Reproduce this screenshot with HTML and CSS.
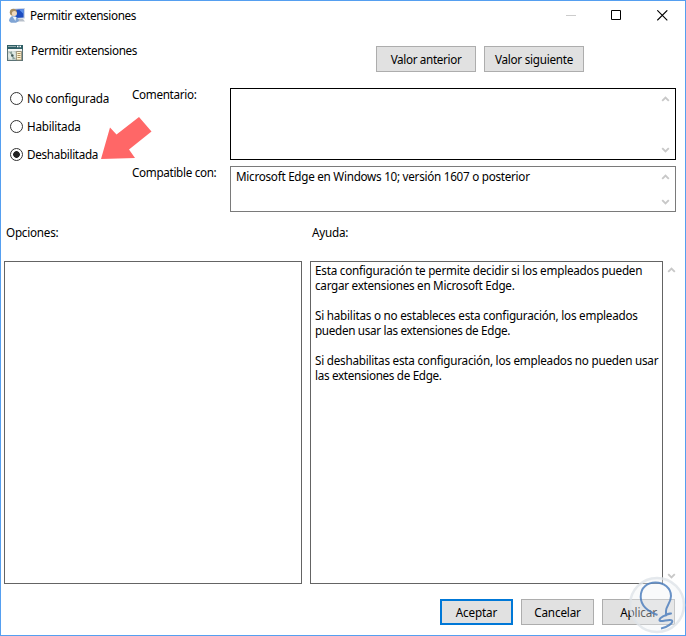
FILE: index.html
```html
<!DOCTYPE html>
<html lang="es">
<head>
<meta charset="utf-8">
<title>Permitir extensiones</title>
<link rel="stylesheet" href="styles.css">
</head>
<body>
<svg class="defs" width="0" height="0">
  <symbol id="up" viewBox="0 0 8 6"><path d="M0.7 4.9 4 1.6 7.3 4.9" fill="none" stroke="#c8c8c8" stroke-width="1.9"/></symbol>
  <symbol id="down" viewBox="0 0 8 6"><path d="M0.7 1.1 4 4.4 7.3 1.1" fill="none" stroke="#c8c8c8" stroke-width="1.9"/></symbol>
</svg>
<div class="window">
  <header class="titlebar">
    <svg class="app-icon" width="16" height="16" viewBox="0 0 16 16">
      <path d="M4.500.8 15.800 0v10.600L4.500 11z" fill="#c3cee0"/>
      <path d="M5.500 1.700 14.600 1.100v8.400L5.500 9.900z" fill="#1c4cc0"/>
      <path d="M10 1.400 14.600 1.100v5z" fill="#5c90ea"/>
      <path d="M9 11h5l2 2.500H8z" fill="#b7bfca"/>
      <circle cx="4.300" cy="4.200" r="3.500" fill="#a98f62"/>
      <circle cx="5.400" cy="5.400" r="2.500" fill="#f0d9bd"/>
      <path d="M0 13c0-3 2-5 4.500-5s5 2 5.500 5l-3 1.800H2z" fill="#7fa4d4"/>
      <path d="m3.500 8.500 2.900 4.500 1-4z" fill="#eef5fc"/>
    </svg>
    <span class="text title">Permitir extensiones</span>
    <div class="controls">
      <svg width="11" height="11" viewBox="0 0 11 11"><path d="M0 5.500h10" stroke="#ccc"/></svg>
      <svg width="11" height="11" viewBox="0 0 11 11"><path d="M.5.5h9v9h-9z" fill="none" stroke="#000"/></svg>
      <svg width="11" height="11" viewBox="0 0 11 11"><path d="m.3.3 10 10m0-10-10 10" stroke="#000" stroke-width="1.1"/></svg>
    </div>
  </header>

  <section class="policy">
    <svg class="policy-icon" width="16" height="16" viewBox="0 0 16 16">
      <path d="M0 0h16v16H0z" fill="#5b7377"/>
      <path d="M0 0h16v4.500H0z" fill="#2f5f66"/>
      <path d="M1 1.500h8" stroke="#8fa9ab"/>
      <path d="M10 1.500h1.500m1 0H14" stroke="#fff" stroke-width="1.500"/>
      <path d="M1 4h14v2H1z" fill="#f4f6f4"/>
      <path d="M1 6h14v9H1z" fill="#c3ccc8"/>
      <circle cx="5.300" cy="10.500" r="4.300" fill="#dfe9e4"/>
      <path d="M5.300 10.500 2 7.500l3-1.300zM5.300 10.500l3.200 3-3 1.200z" fill="#8ea39d"/>
      <circle cx="5.300" cy="10.500" r="1.300" fill="#3f5654"/>
      <path d="M9.400 6.500h5v8.500h-5z" fill="#fff5d4" stroke="#8a8068" stroke-width=".8"/>
      <path d="M10.500 8.500h3M10.500 10.500h3M10.500 12.500h3" stroke="#a28450" stroke-width=".9"/>
    </svg>
    <span class="text name title">Permitir extensiones</span>
    <button class="btn nav"><span class="prev">Valor anterior</span></button>
    <button class="btn nav"><span class="next">Valor siguiente</span></button>
  </section>

  <section class="settings">
    <div class="states">
      <label class="state"><i class="radio"></i><span class="text">No configurada</span></label>
      <label class="state"><i class="radio"></i><span class="text">Habilitada</span></label>
      <label class="state"><i class="radio on"></i><span class="text tight">Deshabilitada</span></label>
      <svg class="pointer" width="52" height="44" viewBox="0 0 52 44"><path d="M0 42 9 10.500l6.500 7L38 0l12.500 14.500L28 32.500l6 8.500z" fill="#ff6767"/></svg>
    </div>
    <div class="labels">
      <span class="text tight">Comentario:</span>
      <span class="text tight">Compatible con:</span>
    </div>
    <div class="fields">
      <div class="box comment"><span></span>
        <div class="scroll"><svg width="9" height="6"><use href="#up"/></svg><svg width="9" height="6"><use href="#down"/></svg></div>
      </div>
      <div class="box supported"><span class="text sup">Microsoft Edge en Windows 10; versión 1607 o posterior</span>
        <div class="scroll"><svg width="9" height="6"><use href="#up"/></svg><svg width="9" height="6"><use href="#down"/></svg></div>
      </div>
    </div>
  </section>

  <section class="panels">
    <div class="column options">
      <h2 class="text">Opciones:</h2>
      <div class="panel"></div>
    </div>
    <div class="column help">
      <h2 class="text">Ayuda:</h2>
      <div class="panel">
        <p><span class="text">Esta configuración te permite decidir si los empleados pueden</span><br><span class="text a2">cargar extensiones en Microsoft Edge.</span></p>
        <p><span class="text">Si habilitas o no estableces esta configuración, los empleados</span><br><span class="text tight">pueden usar las extensiones de Edge.</span></p>
        <p><span class="text">Si deshabilitas esta configuración, los empleados no pueden usar</span><br><span class="text tight">las extensiones de Edge.</span></p>
      </div>
    </div>
    <div class="scroll outer"><svg width="9" height="6"><use href="#up"/></svg><svg width="9" height="6"><use href="#down"/></svg></div>
  </section>

  <footer class="actions">
    <button class="btn primary">Aceptar</button>
    <button class="btn">Cancelar</button>
    <button class="btn">Aplicar</button>
  </footer>
  <svg class="watermark" width="58" height="58" viewBox="0 0 58 58">
    <circle cx="29" cy="29" r="27" fill="#f0f2f5" fill-opacity=".38" stroke="#dfe3e9" stroke-opacity=".8" stroke-width="2.500"/>
    <path d="M29.500 39C24 37 13 32 12.700 21 12.500 11 20 6.500 27.500 6.500 36 6.500 43 12 43 20c0 7-5 10-5 15v4.500c1.500-2 3-2.300 5-2-6 1-11.500 4.500-11.500 6.500 0 3 10-1.500 12.500.5 1.500 2-4.500 7-11 8" fill="none" stroke="#4f7fbd" stroke-opacity=".85" stroke-width="2" stroke-linejoin="round"/>
  </svg>
</div>
</body>
</html>
```
FILE: styles.css
```css
* { box-sizing: border-box; }
body {
  margin: 0;
  background: #fff;
  color: #000;
  font: 11.7px/15px "Noto Sans", "Open Sans", sans-serif;
  letter-spacing: -0.23px;
}
svg { display: block; flex: none; }
.defs { position: absolute; }
.text { white-space: nowrap; }
.title { letter-spacing: -0.36px; }
.tight { letter-spacing: -0.32px; }
.a2, .sup { letter-spacing: -0.27px; }
.window {
  position: relative;
  width: 686px;
  height: 636px;
  border: 1px solid #559ff0;
  display: flex;
  flex-direction: column;
}
.titlebar {
  height: 29px;
  display: flex;
  align-items: center;
  padding: 0 17px 0 8px;
  gap: 5px;
}
.controls { margin-left: auto; display: grid; grid-template-columns: 45px 46px 11px; }
.policy {
  height: 57px;
  display: flex;
  align-items: flex-start;
  padding: 15px 0 0 6px;
}
.policy-icon { margin-right: 8px; }
.name { width: 345px; margin-top: -2px; }
.btn {
  width: 73px;
  height: 26px;
  padding: 0;
  border: 1px solid #adadad;
  background: #e1e1e1;
  color: #000;
  font: inherit;
  letter-spacing: -0.15px;
  white-space: nowrap;
}
.btn.nav { width: 100px; margin: 1px 8px 0 0; }
.prev { letter-spacing: -0.35px; }
.next { letter-spacing: -0.25px; }
.btn.primary { border: 2px solid #0078d7; }
.settings {
  height: 138px;
  display: grid;
  grid-template-columns: 122px 98px 446px;
  padding: 0 0 0 9px;
}
.states { position: relative; padding-top: 5px; }
.state { display: flex; align-items: center; gap: 4px; height: 13px; margin-bottom: 15px; }
.radio {
  width: 13px;
  height: 13px;
  border: 1px solid #333;
  border-radius: 50%;
  flex: none;
}
.radio.on { background: radial-gradient(circle, #222 0 3px, #fff 3.7px); }
.pointer { position: absolute; left: 91px; top: 30px; }
.labels { display: flex; flex-direction: column; gap: 63px; }
.fields { display: flex; flex-direction: column; gap: 6px; padding-top: 1px; }
.box { display: flex; justify-content: space-between; border: 1px solid #7a7a7a; padding: 2px 5px 3px; }
.comment { height: 72px; border-color: #000; }
.supported { height: 46px; }
.scroll { display: flex; flex-direction: column; justify-content: space-between; padding: 5px 0 3px; }
.panels { display: flex; padding-left: 3px; }
.column h2 { margin: 0; height: 36px; padding-left: 2px; font: inherit; }
.options { width: 298px; margin-right: 8px; }
.help { width: 353px; }
.panel { height: 323px; border: 1px solid #646464; padding: 1px 4px; }
.panel p { margin: 0 0 15px; }
.outer { margin: 36px 0 0 4px; padding: 6px 0 5px; }
.actions { display: flex; gap: 8px; justify-content: flex-end; padding: 15px 10px 0 0; }
.watermark { position: absolute; left: 627px; top: 575px; }
```
